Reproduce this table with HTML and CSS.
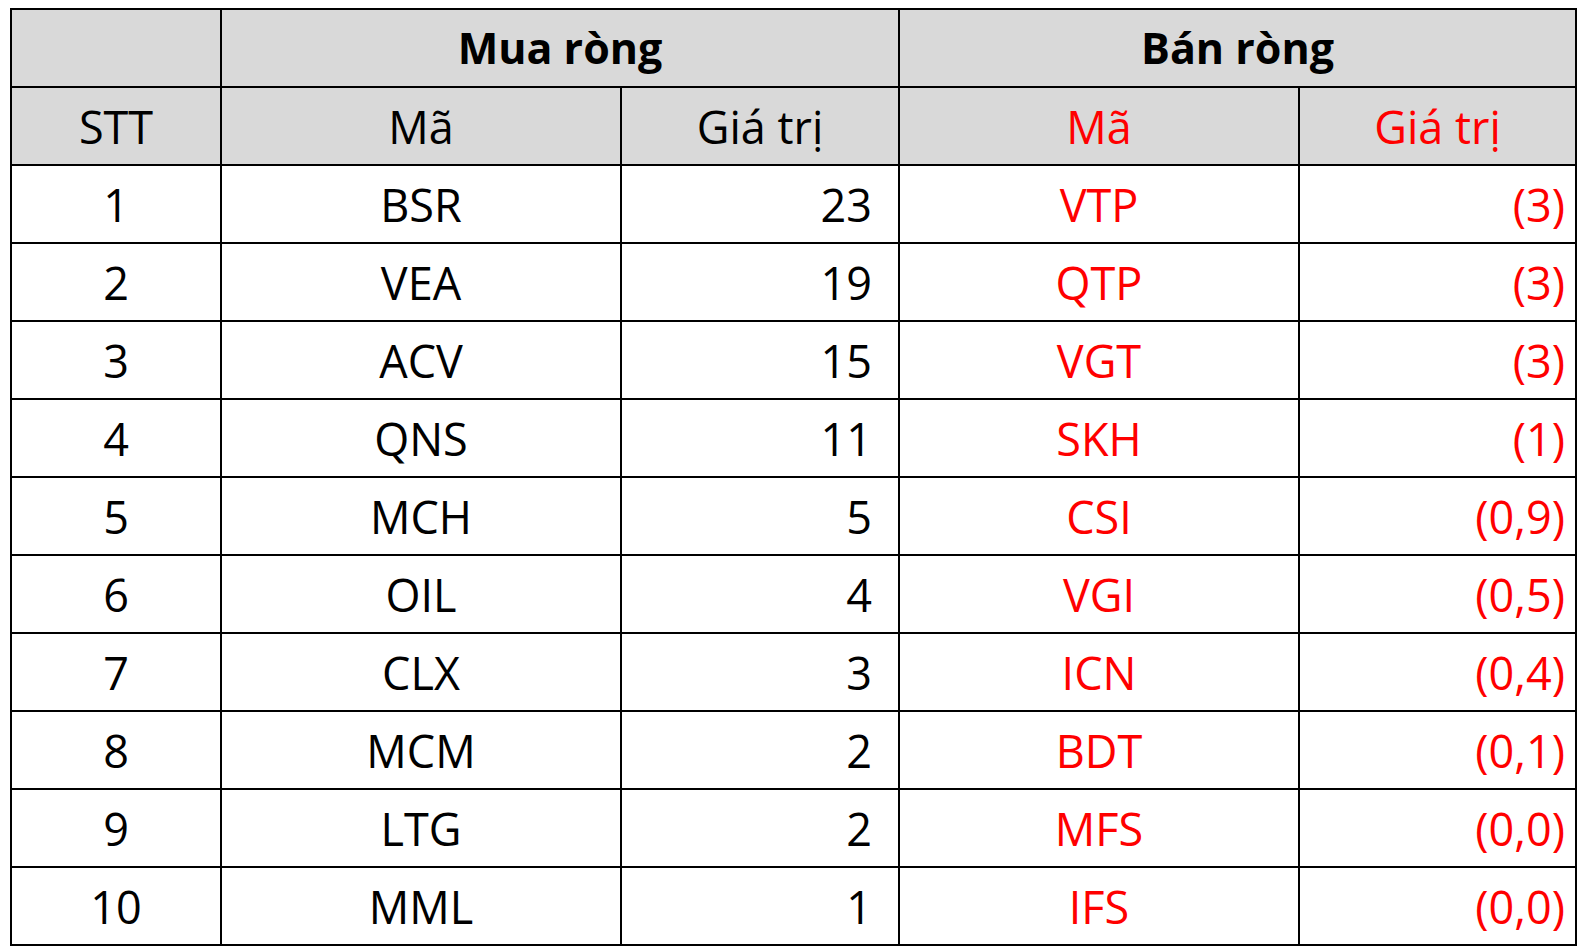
FILE: index.html
```html
<!DOCTYPE html>
<html lang="vi">
<head>
<meta charset="utf-8">
<title>Mua ròng / Bán ròng</title>
<link rel="stylesheet" href="styles.css">
</head>
<body>
<table class="grid">
  <colgroup>
    <col class="c-stt"><col class="c-ma"><col class="c-val"><col class="c-ma"><col class="c-val2">
  </colgroup>
  <thead>
    <tr class="hdr">
      <th></th>
      <th colspan="2" class="group">Mua ròng</th>
      <th colspan="2" class="group">Bán ròng</th>
    </tr>
    <tr class="hdr">
      <th>STT</th>
      <th>Mã</th>
      <th>Giá trị</th>
      <th class="red">Mã</th>
      <th class="red">Giá trị</th>
    </tr>
  </thead>
  <tbody>
    <tr><td>1</td><td>BSR</td><td class="num">23</td><td class="red">VTP</td><td class="num2 red">(3)</td></tr>
    <tr><td>2</td><td>VEA</td><td class="num">19</td><td class="red">QTP</td><td class="num2 red">(3)</td></tr>
    <tr><td>3</td><td>ACV</td><td class="num">15</td><td class="red">VGT</td><td class="num2 red">(3)</td></tr>
    <tr><td>4</td><td>QNS</td><td class="num">11</td><td class="red">SKH</td><td class="num2 red">(1)</td></tr>
    <tr><td>5</td><td>MCH</td><td class="num">5</td><td class="red">CSI</td><td class="num2 red">(0,9)</td></tr>
    <tr><td>6</td><td>OIL</td><td class="num">4</td><td class="red">VGI</td><td class="num2 red">(0,5)</td></tr>
    <tr><td>7</td><td>CLX</td><td class="num">3</td><td class="red">ICN</td><td class="num2 red">(0,4)</td></tr>
    <tr><td>8</td><td>MCM</td><td class="num">2</td><td class="red">BDT</td><td class="num2 red">(0,1)</td></tr>
    <tr><td>9</td><td>LTG</td><td class="num">2</td><td class="red">MFS</td><td class="num2 red">(0,0)</td></tr>
    <tr><td>10</td><td>MML</td><td class="num">1</td><td class="red">IFS</td><td class="num2 red">(0,0)</td></tr>
  </tbody>
</table>
</body>
</html>
```
FILE: styles.css
```css
html, body {
  margin: 0;
  padding: 0;
  background: #ffffff;
}
body {
  padding: 8px 0 0 10px;
  font-family: "Open Sans", "Noto Sans", sans-serif;
  color: #000;
}
.grid {
  border-collapse: collapse;
  table-layout: fixed;
  width: 1567px;
}
.c-stt { width: 210px; }
.c-ma { width: 400px; }
.c-val { width: 278px; }
.c-val2 { width: 277px; }
.grid th, .grid td {
  border: 2px solid #000;
  height: 78px;
  padding: 0;
  font-size: 45px;
  font-weight: 400;
  text-align: center;
  vertical-align: middle;
  line-height: 1;
  padding-top: 1px;
  box-sizing: border-box;
}
.hdr th {
  background: #d9d9d9;
}
.grid th.group {
  font-weight: 700;
  font-size: 43px;
  padding-top: 0;
  padding-bottom: 2px;
}
.grid td.num {
  text-align: right;
  padding-right: 26px;
}
.grid td.num2 {
  text-align: right;
  padding-right: 10px;
}
.red {
  color: #ff0000;
}
```
